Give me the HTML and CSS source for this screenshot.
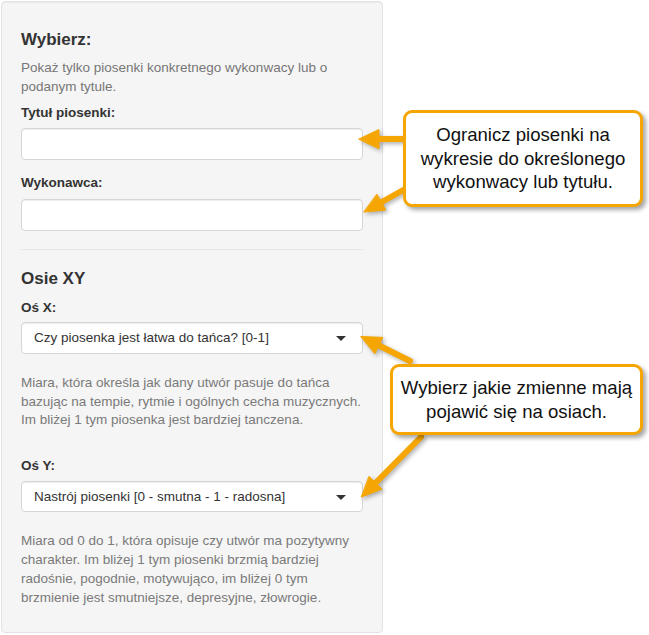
FILE: index.html
```html
<!DOCTYPE html>
<html lang="pl">
<head>
<meta charset="utf-8">
<link rel="stylesheet" href="styles.css">
</head>
<body>
<div class="page">
  <form class="panel">
    <h4 class="title">Wybierz:</h4>
    <p class="intro">Pokaż tylko piosenki konkretnego wykonwacy lub o podanym tytule.</p>
    <label class="lbl">Tytuł piosenki:</label>
    <input class="field field-first" type="text">
    <label class="lbl">Wykonawca:</label>
    <input class="field" type="text">
    <hr class="sep">
    <h4 class="title title-axes">Osie XY</h4>
    <label class="lbl lbl-x">Oś X:</label>
    <div class="select"><span>Czy piosenka jest łatwa do tańca? [0-1]</span><i class="caret"></i></div>
    <p class="help help-x">Miara, która określa jak dany utwór pasuje do tańca bazując na tempie, rytmie i ogólnych cecha muzycznych. Im bliżej 1 tym piosenka jest bardziej tanczena.</p>
    <label class="lbl lbl-y">Oś Y:</label>
    <div class="select"><span>Nastrój piosenki [0 - smutna - 1 - radosna]</span><i class="caret"></i></div>
    <p class="help help-y">Miara od 0 do 1, która opisuje czy utwór ma pozytywny charakter. Im bliżej 1 tym piosenki brzmią bardziej radośnie, pogodnie, motywująco, im bliżej 0 tym brzmienie jest smutniejsze, depresyjne, złowrogie.</p>
  </form>

  <svg class="arrows" width="649" height="635" viewBox="0 0 649 635">
    <g stroke="#f5a602" stroke-width="6" stroke-linecap="round" fill="#f5a602">
      <line x1="404" y1="139" x2="377" y2="139"/>
      <polygon stroke-width="1" stroke-linejoin="round" points="359,139 379,129.5 379,148.5"/>
      <line x1="405" y1="189" x2="380" y2="203"/>
      <polygon stroke-width="1" stroke-linejoin="round" points="364,212 385.8,210.1 377,194.4"/>
      <line x1="410" y1="361" x2="377" y2="344.5"/>
      <polygon stroke-width="1" stroke-linejoin="round" points="361,336.5 382.9,337.4 374.9,353.5"/>
      <line x1="421" y1="437" x2="374.5" y2="484"/>
      <polygon stroke-width="1" stroke-linejoin="round" points="361.5,497 382,489.1 369.2,476.5"/>
    </g>
  </svg>

  <div class="callout callout-one">Ogranicz piosenki na<br>wykresie do określonego<br>wykonwacy lub tytułu.</div>
  <div class="callout callout-two">Wybierz jakie zmienne mają<br>pojawić się na osiach.</div>
</div>
</body>
</html>
```

FILE: styles.css
```css
html, body {
  margin: 0;
  padding: 0;
  background: #ffffff;
}

.page {
  position: relative;
  width: 649px;
  height: 635px;
  overflow: hidden;
  font-family: "Liberation Sans", Arial, sans-serif;
  color: #333333;
}

.panel {
  display: flex;
  flex-direction: column;
  box-sizing: border-box;
  width: 382px;
  margin: 1px 0 0 1px;
  padding: 19px 19px 19px;
  background: #f5f5f5;
  border: 1px solid #e3e3e3;
  border-radius: 4px;
  box-shadow: inset 0 1px 1px rgba(0, 0, 0, 0.05);
}

.title {
  margin: 9px 0 9px;
  font-size: 17px;
  line-height: 20px;
  font-weight: 700;
  color: #333333;
}

.title-axes {
  margin-top: 0;
  margin-bottom: 10px;
}

.intro {
  margin: 0 0 8px;
  font-size: 13.5px;
  line-height: 18.6px;
  color: #777777;
}

.lbl {
  display: block;
  margin: 0 0 5.6px;
  font-size: 13.5px;
  line-height: 18.7px;
  font-weight: 700;
  color: #333333;
}

.lbl-x {
  margin-bottom: 4.5px;
}

.lbl-y {
  margin-bottom: 5px;
}

.field {
  display: block;
  box-sizing: border-box;
  width: 342px;
  height: 32px;
  margin: 0;
  padding: 6px 12px;
  background: #ffffff;
  border: 1px solid #d6d6d6;
  border-radius: 4px;
  box-shadow: inset 0 1px 1px rgba(0, 0, 0, 0.075);
  font: 13.5px "Liberation Sans", Arial, sans-serif;
}

.field-first {
  margin-bottom: 14px;
}

.sep {
  width: 342px;
  margin: 18.7px 0 18.5px;
  border: 0;
  border-top: 1px solid #e6e6e6;
  height: 0;
}

.select {
  display: flex;
  align-items: center;
  justify-content: space-between;
  box-sizing: border-box;
  width: 342px;
  height: 31.6px;
  padding: 0 16px 0 12px;
  background: #ffffff;
  border: 1px solid #d6d6d6;
  border-radius: 4px;
  box-shadow: inset 0 1px 1px rgba(0, 0, 0, 0.075);
  font-size: 13.5px;
  line-height: 18px;
  color: #333333;
}

.caret {
  display: block;
  width: 0;
  height: 0;
  border-left: 5px solid transparent;
  border-right: 5px solid transparent;
  border-top: 5px solid #333333;
  margin-top: 1px;
}

.help {
  margin: 0;
  font-size: 13.5px;
  line-height: 18.8px;
  color: #7a7a7a;
}

.help-x {
  margin-top: 20px;
  margin-bottom: 27px;
}

.help-y {
  margin-top: 19px;
  line-height: 19px;
  margin-bottom: 6px;
}

.arrows {
  position: absolute;
  left: 0;
  top: 0;
  filter: drop-shadow(2px 2px 2px rgba(0, 0, 0, 0.3));
}

.callout {
  position: absolute;
  box-sizing: border-box;
  display: flex;
  align-items: center;
  justify-content: center;
  text-align: center;
  background: #ffffff;
  border: 3px solid #f5a602;
  border-radius: 9px;
  box-shadow: 3px 3px 4px rgba(0, 0, 0, 0.35);
  font-size: 18.6px;
  line-height: 23.5px;
  color: #111111;
}

.callout-one {
  left: 403px;
  top: 110px;
  width: 240px;
  height: 97px;
}

.callout-two {
  left: 390px;
  top: 364px;
  width: 253px;
  height: 71px;
}
```
